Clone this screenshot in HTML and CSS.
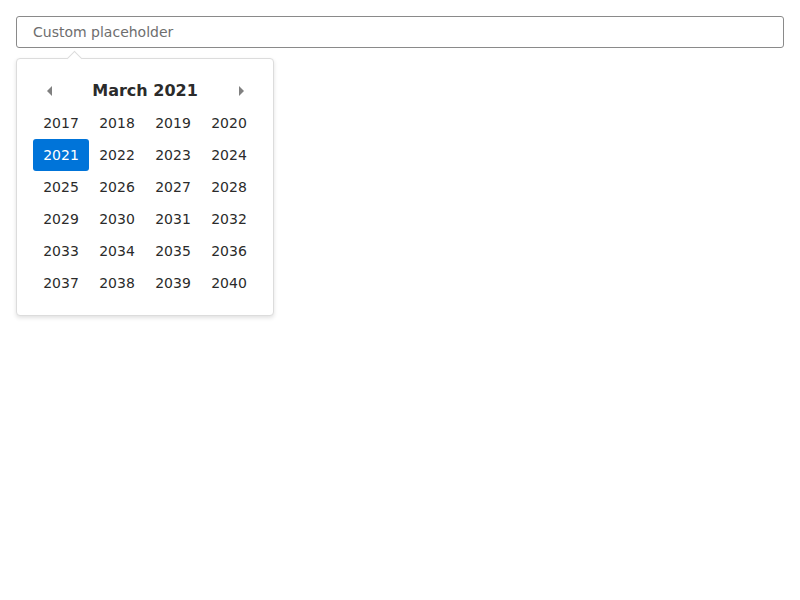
FILE: index.html
```html
<!DOCTYPE html>
<html>
<head>
<meta charset="utf-8">
<link rel="stylesheet" href="styles.css">
</head>
<body>
<div class="page">
  <div class="field">
    <input class="input" type="text" placeholder="Custom placeholder">
  </div>
  <div class="popup">
    <div class="arrow"></div>
    <div class="header">
      <button class="nav prev" aria-label="Previous"><span class="tri-left"></span></button>
      <div class="title">March 2021</div>
      <button class="nav next" aria-label="Next"><span class="tri-right"></span></button>
    </div>
    <div class="grid">
      <div class="cell">2017</div><div class="cell">2018</div><div class="cell">2019</div><div class="cell">2020</div>
      <div class="cell selected">2021</div><div class="cell">2022</div><div class="cell">2023</div><div class="cell">2024</div>
      <div class="cell">2025</div><div class="cell">2026</div><div class="cell">2027</div><div class="cell">2028</div>
      <div class="cell">2029</div><div class="cell">2030</div><div class="cell">2031</div><div class="cell">2032</div>
      <div class="cell">2033</div><div class="cell">2034</div><div class="cell">2035</div><div class="cell">2036</div>
      <div class="cell">2037</div><div class="cell">2038</div><div class="cell">2039</div><div class="cell">2040</div>
    </div>
  </div>
</div>
</body>
</html>
```
FILE: styles.css
```css
html, body {
  margin: 0;
  padding: 0;
  background: #fff;
}
body {
  font-family: "DejaVu Sans", sans-serif;
  color: #2b2b2b;
}
.page {
  padding: 16px;
}
.field {
  display: flex;
}
.input {
  flex: 1;
  box-sizing: border-box;
  height: 32px;
  margin: 0;
  padding: 0 16px;
  border: 1px solid #8a8a8a;
  border-radius: 3px;
  font-family: "DejaVu Sans", sans-serif;
  font-size: 14px;
  color: #2b2b2b;
  background: #fff;
  outline: none;
}
.input::placeholder {
  color: #6e6e6e;
}
.popup {
  position: relative;
  margin-top: 10px;
  width: 258px;
  box-sizing: border-box;
  padding: 15px 16px 16px 16px;
  border: 1px solid #dcdcdc;
  border-radius: 4px;
  background: #fff;
  box-shadow: 0 2px 4px rgba(0,0,0,0.12);
}
.arrow {
  position: absolute;
  top: -6px;
  left: 52px;
  width: 10px;
  height: 10px;
  background: #fff;
  border-left: 1px solid #dcdcdc;
  border-top: 1px solid #dcdcdc;
  transform: rotate(45deg);
}
.header {
  display: flex;
  align-items: center;
  justify-content: space-between;
  height: 32px;
  margin-bottom: 1px;
}
.nav {
  width: 32px;
  height: 32px;
  padding: 2px 0 0 0;
  border: 0;
  background: transparent;
  display: flex;
  align-items: center;
  justify-content: center;
}
.tri-left {
  width: 0;
  height: 0;
  border-top: 5px solid transparent;
  border-bottom: 5px solid transparent;
  border-right: 5px solid #808080;
}
.tri-right {
  width: 0;
  height: 0;
  border-top: 5px solid transparent;
  border-bottom: 5px solid transparent;
  border-left: 5px solid #808080;
}
.title {
  font-size: 16px;
  font-weight: bold;
  color: #2b2b2b;
}
.grid {
  display: grid;
  grid-template-columns: repeat(4, 56px);
  grid-auto-rows: 32px;
}
.cell {
  display: flex;
  align-items: center;
  justify-content: center;
  font-size: 14px;
  color: #2b2b2b;
  border-radius: 3px;
}
.cell.selected {
  background: #0074d9;
  color: #fff;
}
```
